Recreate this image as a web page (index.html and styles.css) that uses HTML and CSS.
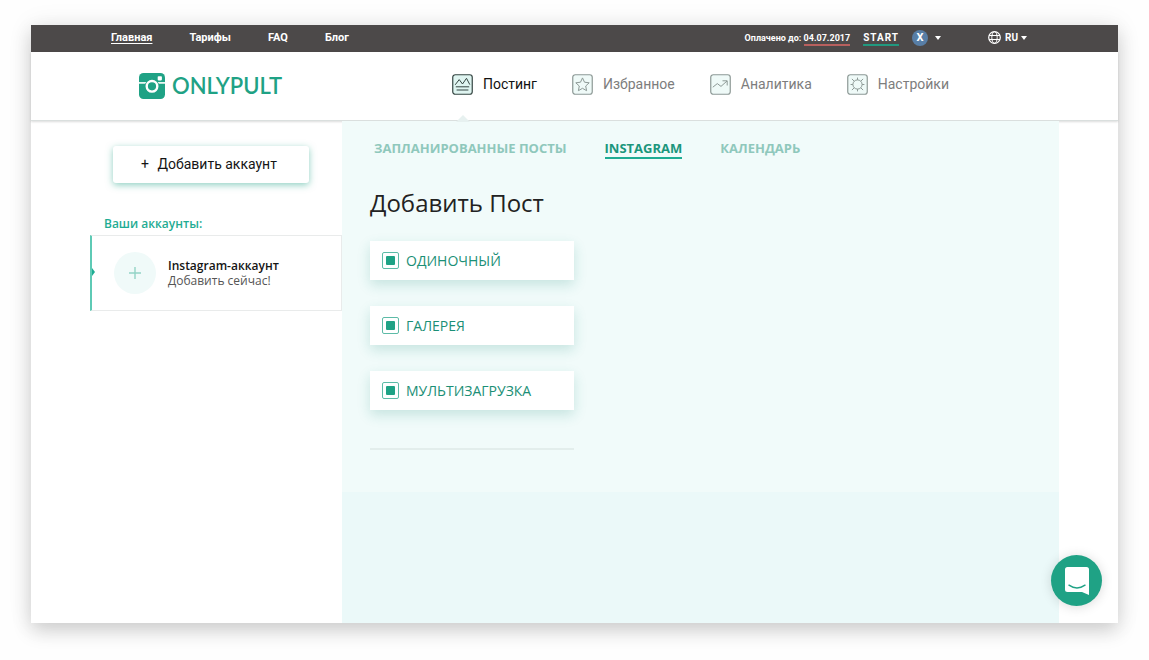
FILE: index.html
```html
<!DOCTYPE html>
<html lang="ru">
<head>
    <meta charset="utf-8">
    <title>Onlypult</title>
    <link rel="stylesheet" href="styles.css">
</head>
<body>
    <div class="window">
        <div class="topbar">
            <nav class="topnav">
                <a href="#" class="current">Главная</a>
                <a href="#">Тарифы</a>
                <a href="#">FAQ</a>
                <a href="#">Блог</a>
            </nav>
            <div class="account">
                <span class="paid">Оплачено до: <a href="#" class="date">04.07.2017</a></span>
                <a href="#" class="plan">START</a>
                <button class="user" type="button" aria-label="Профиль"><span class="avatar">X</span><span class="caret"></span></button>
                <button class="lang" type="button">
                    <svg width="13" height="13" viewBox="0 0 13 13" fill="none" stroke="#fff">
                        <circle cx="6.5" cy="6.5" r="5.8" stroke-width="1.2"/>
                        <ellipse cx="6.5" cy="6.5" rx="2.7" ry="5.8"/>
                        <path d="M1 4.5h11M1 8.5h11"/>
                    </svg>
                    RU<span class="caret"></span>
                </button>
            </div>
        </div>

        <header class="header">
            <a href="#" class="logo">
                <svg width="26" height="26" viewBox="0 0 26 26">
                    <rect width="26" height="26" rx="4.5" fill="#1fa285"/>
                    <path d="M0 9.9h26" stroke="#fff" stroke-width="1.6"/>
                    <circle cx="13" cy="13.3" r="7.2" fill="#1fa285"/>
                    <circle cx="13" cy="13.3" r="5.3" fill="#1fa285" stroke="#fff" stroke-width="2.4"/>
                    <rect x="18.7" y="3.2" width="4.2" height="4.2" rx=".8" fill="#fff"/>
                </svg>
                <span>ONLYPULT</span>
            </a>
            <nav class="mainnav">
                <a href="#" class="active">
                    <svg width="21" height="21" viewBox="0 0 21 21">
                        <rect class="frame" x=".75" y=".75" width="19.5" height="19.5" rx="2.5"/>
                        <path d="M3.2 10.8l4-5.2 3.3 4.4 4-5.7 3.3 6.3M3.8 12.8h13.4M4.6 16h11.8"/>
                    </svg>
                    Постинг
                </a>
                <a href="#">
                    <svg width="21" height="21" viewBox="0 0 21 21">
                        <rect class="frame" x=".75" y=".75" width="19.5" height="19.5" rx="2.5"/>
                        <path d="M10.5 3.9l2 4.3 4.7.6-3.5 3.2.9 4.7-4.1-2.4-4.1 2.4.9-4.7-3.5-3.2 4.7-.6z"/>
                    </svg>
                    Избранное
                </a>
                <a href="#">
                    <svg width="21" height="21" viewBox="0 0 21 21">
                        <rect class="frame" x=".75" y=".75" width="19.5" height="19.5" rx="2.5"/>
                        <path d="M2.8 13.2l4.5-3.6 3.7 2.8 6-5.4M12.5 6.8h4.7v4.7"/>
                    </svg>
                    Аналитика
                </a>
                <a href="#">
                    <svg width="21" height="21" viewBox="0 0 21 21">
                        <rect class="frame" x=".75" y=".75" width="19.5" height="19.5" rx="2.5"/>
                        <circle cx="10.5" cy="10.5" r="4.6"/>
                        <path d="M10.5 5.9V3.6M10.5 15.1v2.3M5.9 10.5H3.6M15.1 10.5h2.3M7.2 7.2L4.9 4.9M13.8 13.8l2.3 2.3M13.8 7.2l2.3-2.3M7.2 13.8l-2.3 2.3"/>
                    </svg>
                    Настройки
                </a>
            </nav>
        </header>

        <div class="content">
            <aside class="sidebar">
                <button class="add-account" type="button"><span>+</span> Добавить аккаунт</button>
                <h2>Ваши аккаунты:</h2>
                <a href="#" class="account-card">
                    <span class="plus">
                        <svg width="12" height="12" viewBox="0 0 12 12" stroke="#93d3c6" stroke-width="1.4"><path d="M6 0v12M0 6h12"/></svg>
                    </span>
                    <span class="account-text">
                        <strong>Instagram-аккаунт</strong>
                        <span>Добавить сейчас!</span>
                    </span>
                </a>
            </aside>

            <main class="main">
                <div class="panel">
                    <nav class="tabs">
                        <a href="#">ЗАПЛАНИРОВАННЫЕ ПОСТЫ</a>
                        <a href="#" class="active">INSTAGRAM</a>
                        <a href="#">КАЛЕНДАРЬ</a>
                    </nav>
                    <h1>Добавить Пост</h1>
                    <div class="types">
                        <button type="button"><i class="mark"></i>ОДИНОЧНЫЙ</button>
                        <button type="button"><i class="mark"></i>ГАЛЕРЕЯ</button>
                        <button type="button"><i class="mark"></i>МУЛЬТИЗАГРУЗКА</button>
                    </div>
                </div>
            </main>
        </div>

        <button class="chat" type="button" aria-label="Чат">
            <svg width="26" height="28" viewBox="0 0 26 28">
                <path d="M3.5 0h19a2.5 2.5 0 0 1 2.5 2.5V28L18 25H3.500A2.500 2.500 0 0 1 1 22.500V2.500A2.500 2.500 0 0 1 3.500 0z" fill="#fff"/>
                <path d="M5 18.200q8 5.600 16 0" fill="none" stroke="#1fa285" stroke-width="1.500" stroke-linecap="round"/>
            </svg>
        </button>
    </div>
</body>
</html>
```

FILE: styles.css
```css
* { box-sizing: border-box; }
body {
    display: flex;
    min-height: 100vh;
    margin: 0;
    padding: 25px 31px 37px;
    background: #fefefe;
    font-family: Roboto, "Liberation Sans", sans-serif;
}
a { color: inherit; text-decoration: none; }
button { border: 0; padding: 0; background: none; color: inherit; font: inherit; cursor: pointer; }
svg { flex: none; }

.window {
    position: relative;
    display: flex;
    flex-direction: column;
    flex: 1;
    background: #fff;
    box-shadow: 0 8px 18px rgba(0, 0, 0, 0.16), 0 0 24px rgba(0, 0, 0, 0.08);
}

/* top bar */
.topbar {
    display: flex;
    justify-content: space-between;
    align-items: center;
    height: 27px;
    padding: 0 91px 2px 80px;
    background: #4c4949;
    color: #fff;
    font-size: 11px;
    font-weight: bold;
}
.topnav { display: flex; gap: 37px; }
.topnav .current { text-decoration: underline; text-underline-offset: 2px; }
.account { display: flex; align-items: center; }
.paid { font-size: 9px; }
.date { padding-bottom: 1px; border-bottom: 2px solid #b8605e; }
.plan {
    margin-left: 13px;
    padding: 4px 0 1px;
    border-bottom: 2px solid #21997f;
    font-size: 10px;
    line-height: 10px;
    letter-spacing: 1px;
}
.user { display: flex; align-items: center; gap: 7px; margin-left: 13px; }
.avatar { width: 16px; height: 16px; border-radius: 50%; background: #587ea6; line-height: 16px; }
.caret { border: 3px solid transparent; border-top: 4px solid #fff; border-bottom: 0; }
.lang { display: flex; align-items: center; gap: 4px; margin-left: 47px; font-size: 10px; }
.lang .caret { margin-left: -1px; }

/* header */
.header {
    display: flex;
    justify-content: space-between;
    align-items: center;
    height: 69px;
    padding: 0 169px 4px 108px;
    border-bottom: 1px solid #dadfde;
    box-shadow: 0 1px 2px rgba(0, 0, 0, 0.14);
}
.logo {
    display: flex;
    align-items: center;
    gap: 7px;
    padding-top: 3px;
    color: #1fa285;
    font: 600 22px/26px Lato, sans-serif;
}
.mainnav { display: flex; gap: 35px; }
.mainnav a { position: relative; display: flex; align-items: center; gap: 10px; color: #7d7d7d; font-size: 14px; }
.mainnav svg { fill: none; stroke: #8d9996; stroke-width: 1; }
.mainnav .frame { fill: #effaf8; stroke-width: 1.2; }
.mainnav .active { color: #111; }
.mainnav .active svg { stroke: #354542; }
.mainnav .active .frame { fill: #dff5f1; }
.mainnav .active::after {
    content: "";
    position: absolute;
    left: 4px;
    bottom: -27px;
    border: 7px solid transparent;
    border-top: 0;
    border-bottom-color: #e7f1f0;
}

/* sidebar */
.content { display: flex; flex: 1; padding: 0 59px; }
.sidebar { width: 252px; padding-top: 25px; }
.add-account {
    display: block;
    width: 196px;
    height: 37px;
    margin: 0 23px;
    border-radius: 3px;
    padding: 0 4px 2px 0;
    background: #fff;
    color: #151515;
    font-size: 14px;
    box-shadow: 0 2px 7px rgba(31, 162, 133, 0.5);
}
.add-account span { margin-right: 5px; }
.sidebar h2 {
    margin: 33px 0 3px 14px;
    color: #1fac93;
    font: 600 12px/16px "Open Sans", sans-serif;
}
.account-card {
    position: relative;
    display: flex;
    align-items: center;
    gap: 12px;
    height: 76px;
    padding-left: 22px;
    border: 1px solid #e9ebeb;
    border-left: 2px solid #5ecab5;
    font: 12px/15px "Open Sans", sans-serif;
}
.account-card::before {
    content: "";
    position: absolute;
    left: 0;
    top: 32px;
    border: 4px solid transparent;
    border-left: 3px solid #1fac93;
    border-right: 0;
}
.plus { display: flex; align-items: center; justify-content: center; width: 42px; height: 42px; border-radius: 50%; background: #f0faf9; }
.account-text { display: flex; flex-direction: column; color: #555; }
.account-text strong { color: #151515; font-weight: 600; }

/* main */
.main { flex: 1; background: #ebf9f9; }
.panel { height: 371px; padding: 18px 28px 0; background: #f1fbfa; }
.tabs { display: flex; gap: 38px; padding-left: 4px; color: #8fc8bc; font: bold 13px/18px "Open Sans", sans-serif; }
.tabs .active { color: #1c967c; border-bottom: 2px solid #1fac93; }
.panel h1 { margin: 27px 0 21px; color: #222; font: 24px/34px "Open Sans", sans-serif; }
.types {
    display: flex;
    flex-direction: column;
    gap: 26px;
    width: 204px;
    padding-bottom: 38px;
    border-bottom: 2px solid #e3eeec;
}
.types button {
    display: flex;
    align-items: center;
    gap: 7px;
    height: 39px;
    padding-left: 12px;
    background: #fff;
    color: #1b8f76;
    font: 14px/20px "Open Sans", sans-serif;
    box-shadow: 0 5px 12px rgba(31, 140, 125, 0.2);
}
.mark {
    display: flex;
    align-items: center;
    justify-content: center;
    width: 17px;
    height: 17px;
    border: 1px solid #5dbba7;
    border-radius: 2px;
}
.mark::before { content: ""; width: 9px; height: 9px; border-radius: 1px; background: #1fa285; }

.chat {
    position: absolute;
    right: 16px;
    bottom: 17px;
    display: flex;
    align-items: center;
    justify-content: center;
    width: 51px;
    height: 51px;
    border-radius: 50%;
    background: #1fa285;
    box-shadow: 0 1px 12px rgba(0, 0, 0, 0.15);
}
```
